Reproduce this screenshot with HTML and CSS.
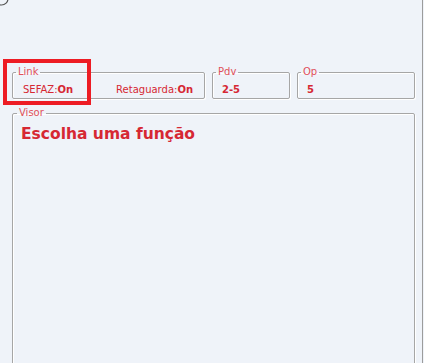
FILE: index.html
```html
<!DOCTYPE html>
<html lang="pt-BR">
  <head>
    <meta charset="UTF-8">
    <meta name="viewport" content="width=device-width, initial-scale=1.0">
    <title>Visor</title>
    <link rel="stylesheet" href="styles.css">
  </head>
  <body>
    <div class="window">
      <svg class="corner" width="12" height="10" viewBox="0 0 12 10">
        <circle cx="1.5" cy="-1.5" r="6.5" fill="none" stroke="#555" stroke-width="1.2"/>
      </svg>

      <div class="status-row">
        <fieldset class="group group-link">
          <legend>Link</legend>
          <div class="group-body">
            <span>SEFAZ:<b>On</b></span>
            <span class="push">Retaguarda:<b>On</b></span>
          </div>
        </fieldset>
        <fieldset class="group group-pdv">
          <legend>Pdv</legend>
          <div class="group-body"><b>2-5</b></div>
        </fieldset>
        <fieldset class="group group-op">
          <legend>Op</legend>
          <div class="group-body"><b>5</b></div>
        </fieldset>
      </div>

      <fieldset class="group visor">
        <legend>Visor</legend>
        <div class="visor-text">Escolha uma função</div>
      </fieldset>

      <div class="highlight"></div>
    </div>
  </body>
</html>
```

FILE: styles.css
```css
body {
  margin: 0;
  background-color: #eff3f9;
  font-family: "DejaVu Sans", Verdana, sans-serif;
  color: #d62833;
  overflow: hidden;
}
.window {
  position: relative;
  width: 423px;
  height: 363px;
  box-sizing: border-box;
  border-right: 1px solid #9c9c9c;
  padding: 67px 0 0 12px;
  overflow: hidden;
}
.corner {
  position: absolute;
  left: 0;
  top: 0;
}
.status-row {
  display: flex;
  gap: 7px;
}
.group {
  margin: 0;
  padding: 0;
  border: 1px solid #a6a6a6;
  border-radius: 2px;
  box-shadow: inset 1px 1px #ffffff, 1px 1px #ffffff;
}
.group legend {
  margin-left: 3px;
  padding: 0 2px;
  font-size: 10px;
  line-height: 10px;
  color: #e0505a;
}
.group-body {
  display: flex;
  font-size: 10px;
  line-height: 13px;
  padding: 6px 0 2px 10px;
}
.push {
  margin-left: auto;
  padding-right: 11px;
}
.group-link {
  width: 193px;
  box-sizing: border-box;
}
.group-pdv {
  width: 78px;
  box-sizing: border-box;
}
.group-pdv .group-body,
.group-op .group-body {
  padding-left: 9px;
}
.group-op {
  width: 118px;
  box-sizing: border-box;
}
.visor {
  width: 403px;
  height: 280px;
  box-sizing: border-box;
  margin-top: 9px;
}
.visor legend {
  margin-left: 4px;
}
.visor-text {
  font-size: 15.5px;
  line-height: 18px;
  font-weight: bold;
  padding: 7px 0 0 8px;
}
.highlight {
  position: absolute;
  left: 3px;
  top: 59px;
  width: 88px;
  height: 46px;
  box-sizing: border-box;
  border: 4px solid #ed1c24;
}
```
